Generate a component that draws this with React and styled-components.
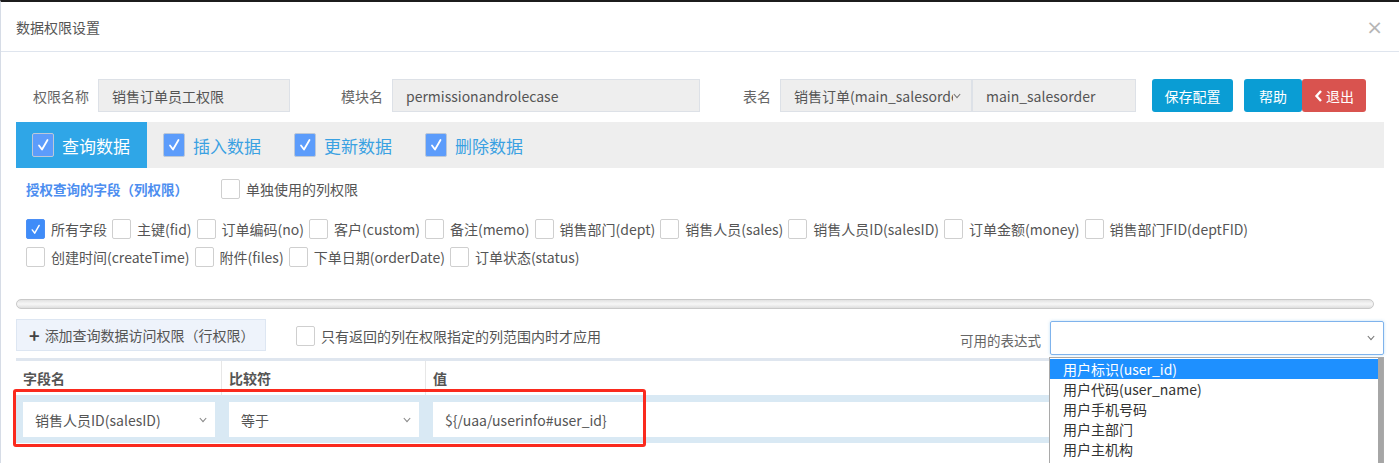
import React from 'react'
import styled, { createGlobalStyle } from 'styled-components'

const GlobalStyle = createGlobalStyle`
  html, body {
    margin: 0;
    padding: 0;
    background: #fff;
  }
  body {
    font-family: "Noto Sans CJK SC", "Microsoft YaHei", sans-serif;
    font-size: 14px;
    color: #555;
  }
  * {
    box-sizing: border-box;
  }
`

const Modal = styled.div`
  position: relative;
  height: 463px;
  overflow: hidden;
  border-top: 2px solid #1c1c1c;
  border-left: 1px solid #d6dce6;
`

const Header = styled.div`
  height: 50px;
  display: flex;
  align-items: center;
  justify-content: space-between;
  padding: 0 16px 0 15px;
  border-bottom: 1px solid #dfe5ee;
`

const Title = styled.div`
  font-size: 14px;
  color: #555;
`

const Close = styled.div`
  font-size: 20px;
  color: #b5b5b5;
  line-height: 1;
  font-family: "DejaVu Sans", sans-serif;
`

const Body = styled.div`
  padding: 27px 15px 0 15px;
`

const FormRow = styled.div`
  display: flex;
  align-items: center;
  height: 33px;
  padding-left: 17px;
`

const Label = styled.span`
  color: #666;
  margin-left: ${(p) => p.$ml || 0}px;
  margin-right: 9px;
  white-space: nowrap;
`

const ReadOnly = styled.div`
  width: ${(p) => p.$w}px;
  height: 33px;
  display: flex;
  align-items: center;
  padding: 0 10px 0 13px;
  background: #eeeeee;
  border: 1px solid #dde1e7;
  color: #555;
  white-space: nowrap;
  overflow: hidden;
`

const ReadText = styled.span`
  flex: 1;
  overflow: hidden;
`

const Button = styled.div`
  height: 33px;
  width: ${(p) => p.$w}px;
  margin-left: ${(p) => p.$ml || 0}px;
  display: flex;
  align-items: center;
  justify-content: center;
  gap: 3px;
  color: #fff;
  border-radius: 3px;
  background: ${(p) => (p.$danger ? '#d9534f' : '#0a9dd4')};
`

const TabBar = styled.div`
  margin-top: 10px;
  height: 46px;
  background: #eeeeee;
  display: flex;
`

const Tab = styled.div`
  display: flex;
  align-items: center;
  gap: 8px;
  padding: 0 17px 0 16px;
  font-size: 17px;
  color: ${(p) => (p.$active ? '#fff' : '#3aa1e2')};
  background: ${(p) => (p.$active ? '#2fa6e7' : 'transparent')};
`

const TabBox = styled.span`
  width: 22px;
  height: 24px;
  border: 1px solid #bcc8d8;
  border-radius: 2px;
  background: #5c9cfb;
  display: flex;
  align-items: center;
  justify-content: center;
`

const Box = styled.span`
  flex: none;
  width: 19px;
  height: 20px;
  border: 1px solid ${(p) => (p.$checked ? '#4b8ff6' : '#cfcfcf')};
  border-radius: 2px;
  background: ${(p) => (p.$checked ? '#3f8cf8' : '#fff')};
  display: flex;
  align-items: center;
  justify-content: center;
`

const ColHeader = styled.div`
  height: 42px;
  display: flex;
  align-items: center;
  padding-left: 10px;
`

const ColTitle = styled.span`
  color: #4d8ef0;
  font-weight: bold;
  font-size: 13.5px;
  margin-right: 33px;
`

const CheckLabel = styled.label`
  display: flex;
  align-items: center;
  gap: 6px;
  color: #555;
  white-space: nowrap;
`

const FieldList = styled.div`
  display: flex;
  flex-wrap: wrap;
  margin-top: 5px;
  padding-left: 10px;
  width: 1300px;
`

const FieldItem = styled(CheckLabel)`
  height: 28px;
  margin-right: 5px;
  font-size: 14px;
`

const Break = styled.div`
  flex-basis: 100%;
  height: 0;
`

const ScrollTrack = styled.div`
  margin-top: 28px;
  margin-right: 10px;
  height: 10px;
  border: 1px solid #c9c9c9;
  border-radius: 5px;
  background: linear-gradient(#e2e2e2, #f7f7f7 50%, #dedede);
`

const Toolbar = styled.div`
  margin-top: 10px;
  height: 37px;
  display: flex;
  align-items: flex-start;
`

const AddButton = styled.div`
  width: 250px;
  height: 32px;
  display: flex;
  align-items: center;
  padding-left: 12px;
  gap: 5px;
  background: #eef3fb;
  border: 1px solid #dde6f2;
  color: #555;
  margin-right: 30px;
`

const Plus = styled.span`
  font-size: 18px;
  font-weight: bold;
  color: #444;
  line-height: 1;
`

const ToolCheck = styled(CheckLabel)`
  margin-top: 7px;
`

const ExprLabel = styled.span`
  margin-left: auto;
  margin-top: 11px;
  margin-right: 9px;
  color: #666;
  font-size: 13.5px;
`

const ExprSelect = styled.div`
  margin-top: 2px;
  width: 334px;
  height: 34px;
  border: 1px solid #7fb3ec;
  border-radius: 2px;
  box-shadow: 0 0 3px rgba(102, 175, 233, 0.45);
  display: flex;
  align-items: center;
  justify-content: flex-end;
  padding-right: 8px;
`

const Table = styled.div`
  margin-top: 2px;
  border-top: 3px solid #dfe6ef;
`

const Grid = styled.div`
  display: grid;
  grid-template-columns: 206px 204px 1fr;
`

const HeadCell = styled.div`
  height: 34px;
  display: flex;
  align-items: center;
  padding-left: 7px;
  font-weight: bold;
  color: #555;
  border-right: ${(p) => (p.$last ? 'none' : '1px solid #e7e7e7')};
`

const BodyRow = styled(Grid)`
  background: #d9e9f4;
  padding: 7px 0 6px;
`

const Cell = styled.div`
  padding: 0 7px;
`

const Field = styled.div`
  height: 35px;
  background: #fff;
  display: flex;
  align-items: center;
  padding: 0 8px 0 12px;
  color: #555;
  white-space: nowrap;
`

const Dropdown = styled.div`
  position: absolute;
  left: 1048px;
  top: 355px;
  width: 335px;
  height: 120px;
  background: #fff;
  border: 1px solid #a9a9a9;
  padding: 1px 5px 0 0;
`

const DropScroll = styled.div`
  position: absolute;
  right: 0;
  top: 0;
  bottom: 0;
  width: 5px;
  background: #a6a6a6;
`

const Option = styled.div`
  height: 20px;
  line-height: 20px;
  padding-left: 13px;
  font-size: 14px;
  color: ${(p) => (p.$selected ? '#fff' : '#333')};
  background: ${(p) => (p.$selected ? '#1e90ff' : 'transparent')};
`

const Highlight = styled.div`
  position: absolute;
  left: 12px;
  top: 387px;
  width: 633px;
  height: 58px;
  border: 3px solid #fa2a1e;
  border-radius: 3px;
`

const Check = ({ size = 14 }) => (
  <svg width={size} height={size} viewBox="0 0 16 16">
    <path d="M4 8.5 L7 12.5 L12.5 3" fill="none" stroke="#fff" strokeWidth="1.8" strokeLinecap="round" strokeLinejoin="round" />
  </svg>
)

const Chevron = ({ color = '#888' }) => (
  <svg width="8" height="6" viewBox="0 0 8 6">
    <path d="M0.8 1 L4 4.6 L7.2 1" fill="none" stroke={color} strokeWidth="1.1" />
  </svg>
)

const CheckBox = ({ checked }) => (
  <Box $checked={checked}>{checked && <Check size={13} />}</Box>
)

const tabs = ['查询数据', '插入数据', '更新数据', '删除数据']

const fields = [
  { name: '所有字段', checked: true },
  { name: '主键(fid)' },
  { name: '订单编码(no)' },
  { name: '客户(custom)' },
  { name: '备注(memo)' },
  { name: '销售部门(dept)' },
  { name: '销售人员(sales)' },
  { name: '销售人员ID(salesID)' },
  { name: '订单金额(money)' },
  { name: '销售部门FID(deptFID)' },
  { name: '创建时间(createTime)', wrap: true },
  { name: '附件(files)' },
  { name: '下单日期(orderDate)' },
  { name: '订单状态(status)' }
]

const expressions = [
  '用户标识(user_id)',
  '用户代码(user_name)',
  '用户手机号码',
  '用户主部门',
  '用户主机构',
  '用户主岗位'
]

const App = () => (
  <>
    <GlobalStyle />
    <Modal>
      <Header>
        <Title>数据权限设置</Title>
        <Close>×</Close>
      </Header>

      <Body>
        <FormRow>
          <Label>权限名称</Label>
          <ReadOnly $w={192}>销售订单员工权限</ReadOnly>
          <Label $ml={51}>模块名</Label>
          <ReadOnly $w={308}>permissionandrolecase</ReadOnly>
          <Label $ml={43}>表名</Label>
          <ReadOnly $w={192}>
            <ReadText>销售订单(main_salesorder)</ReadText>
            <Chevron color="#777" />
          </ReadOnly>
          <ReadOnly $w={164}>main_salesorder</ReadOnly>
          <Button $w={81} $ml={16}>保存配置</Button>
          <Button $w={58} $ml={11}>帮助</Button>
          <Button $w={64} $danger>
            <svg width="9" height="12" viewBox="0 0 9 12">
              <path d="M7 1 L2.5 6 L7 11" fill="none" stroke="#fff" strokeWidth="2.4" />
            </svg>
            退出
          </Button>
        </FormRow>

        <TabBar>
          {tabs.map((t, i) => (
            <Tab key={t} $active={i === 0}>
              <TabBox><Check size={16} /></TabBox>
              {t}
            </Tab>
          ))}
        </TabBar>

        <ColHeader>
          <ColTitle>授权查询的字段（列权限）</ColTitle>
          <CheckLabel>
            <CheckBox />
            单独使用的列权限
          </CheckLabel>
        </ColHeader>

        <FieldList>
          {fields.map((f) => (
            <React.Fragment key={f.name}>
              {f.wrap && <Break />}
              <FieldItem>
                <CheckBox checked={f.checked} />
                {f.name}
              </FieldItem>
            </React.Fragment>
          ))}
        </FieldList>

        <ScrollTrack />

        <Toolbar>
          <AddButton>
            <Plus>+</Plus>
            添加查询数据访问权限（行权限）
          </AddButton>
          <ToolCheck>
            <CheckBox />
            只有返回的列在权限指定的列范围内时才应用
          </ToolCheck>
          <ExprLabel>可用的表达式</ExprLabel>
          <ExprSelect>
            <Chevron color="#777" />
          </ExprSelect>
        </Toolbar>

        <Table>
          <Grid>
            <HeadCell>字段名</HeadCell>
            <HeadCell>比较符</HeadCell>
            <HeadCell $last>值</HeadCell>
          </Grid>
          <BodyRow>
            <Cell>
              <Field>
                <ReadText>销售人员ID(salesID)</ReadText>
                <Chevron />
              </Field>
            </Cell>
            <Cell>
              <Field>
                <ReadText>等于</ReadText>
                <Chevron />
              </Field>
            </Cell>
            <Cell>
              <Field>{'${/uaa/userinfo#user_id}'}</Field>
            </Cell>
          </BodyRow>
        </Table>
      </Body>

      <Highlight />

      <Dropdown>
        {expressions.map((e, i) => (
          <Option key={e} $selected={i === 0}>{e}</Option>
        ))}
        <DropScroll />
      </Dropdown>
    </Modal>
  </>
)

export default App
